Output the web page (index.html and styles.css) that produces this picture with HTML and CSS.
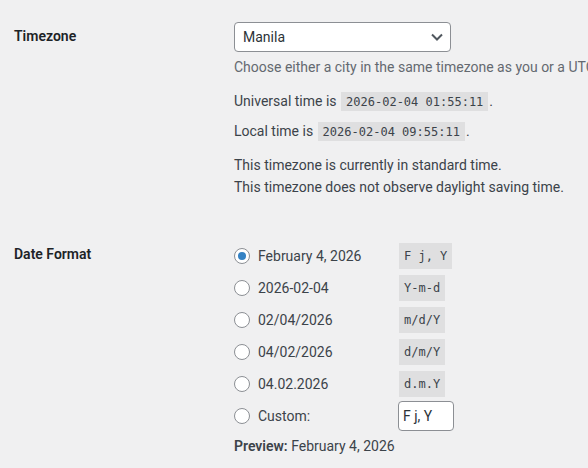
FILE: index.html
```html
<!DOCTYPE html>
<html>
<head>
    <meta charset="UTF-8">
    <meta name="viewport" content="width=device-width, initial-scale=1.0">
    <title>General Settings</title>
    <link rel="stylesheet" href="styles.css">
</head>
<body>
    <div class="wrap">
        <table class="form-table">
            <tr>
                <th>Timezone</th>
                <td>
                    <span class="select-wrap">
                        <select id="timezone">
                            <option selected>Manila</option>
                            <option>Singapore</option>
                            <option>Tokyo</option>
                            <option>UTC+8</option>
                        </select>
                        <svg class="chevron" width="12" height="8" viewBox="0 0 12 8"><path d="M1 1.5l5 5 5-5" fill="none" stroke="#50575e" stroke-width="2"/></svg>
                    </span>
                    <p class="description">Choose either a city in the same timezone as you or a UTC (Coordinated Universal Time) time offset.</p>
                    <p class="timezone-info">Universal time is <code>2026-02-04 01:55:11</code>.</p>
                    <p class="timezone-info">Local time is <code>2026-02-04 09:55:11</code>.</p>
                    <p class="timezone-info dst">This timezone is currently in standard time.<br>This timezone does not observe daylight saving time.</p>
                </td>
            </tr>
            <tr>
                <th>Date Format</th>
                <td>
                    <fieldset id="formats">
                        <label><input type="radio" name="date_format" value="F j, Y" checked> <span class="date-time-text">February 4, 2026</span><code>F j, Y</code></label>
                        <label><input type="radio" name="date_format" value="Y-m-d"> <span class="date-time-text">2026-02-04</span><code>Y-m-d</code></label>
                        <label><input type="radio" name="date_format" value="m/d/Y"> <span class="date-time-text">02/04/2026</span><code>m/d/Y</code></label>
                        <label><input type="radio" name="date_format" value="d/m/Y"> <span class="date-time-text">04/02/2026</span><code>d/m/Y</code></label>
                        <label><input type="radio" name="date_format" value="d.m.Y"> <span class="date-time-text">04.02.2026</span><code>d.m.Y</code></label>
                        <label><input type="radio" name="date_format" value="custom"> <span class="date-time-text">Custom:</span><input type="text" class="small-text" value="F j, Y"></label>
                    </fieldset>
                    <p class="preview"><strong>Preview:</strong> <span id="example">February 4, 2026</span></p>
                </td>
            </tr>
        </table>
    </div>
</body>
</html>
```

FILE: styles.css
```css
body {
    margin: 0;
    background-color: #f0f0f1;
    color: #3c434a;
    font-family: "Segoe UI", Roboto, "Noto Sans", sans-serif;
    font-size: 14px;
    overflow: hidden;
}
.wrap {
    padding: 7px 0 0 14px;
}
.form-table {
    width: 100%;
    table-layout: fixed;
    border-collapse: collapse;
}
.form-table th {
    width: 200px;
    padding: 20px 10px 20px 0;
    text-align: left;
    vertical-align: top;
    font-weight: 600;
    line-height: 18px;
    color: #1d2327;
}
.form-table td {
    padding: 15px 10px;
    line-height: 21px;
    vertical-align: top;
    white-space: nowrap;
}
.form-table p {
    margin: 0;
}
.select-wrap {
    position: relative;
    display: block;
    width: 217px;
}
select {
    display: block;
    width: 217px;
    height: 30px;
    padding: 0 24px 0 8px;
    border: 1px solid #8c8f94;
    border-radius: 4px;
    background: #fff;
    color: #2c3338;
    font: inherit;
    appearance: none;
}
.chevron {
    position: absolute;
    right: 8px;
    top: 11px;
    pointer-events: none;
}
.description {
    color: #646970;
    margin-top: 5px !important;
}
.timezone-info {
    margin-top: 13px !important;
}
.timezone-info + .timezone-info {
    margin-top: 8px !important;
}
.timezone-info.dst {
    margin: 11px 0 12px !important;
    line-height: 22px;
}
code {
    margin: 0 1px;
    padding: 3px 5px 2px;
    background: rgba(0, 0, 0, 0.07);
    font-family: "DejaVu Sans Mono", monospace;
    font-size: 12px;
    color: #3c434a;
}
fieldset {
    margin: 0;
    padding: 0;
    border: 0;
}
fieldset label {
    display: flex;
    align-items: center;
    height: 32px;
}
input[type="radio"] {
    appearance: none;
    width: 16px;
    height: 16px;
    margin: 0 4px 0 0;
    border: 1px solid #8c8f94;
    border-radius: 50%;
    background: #fff;
    display: inline-flex;
    align-items: center;
    justify-content: center;
}
input[type="radio"]:checked::before {
    content: "";
    width: 8px;
    height: 8px;
    border-radius: 50%;
    background: #3582c4;
}
.date-time-text {
    display: inline-block;
    min-width: 140px;
    margin-left: 4px;
}
.small-text {
    width: 56px;
    height: 30px;
    box-sizing: border-box;
    padding: 0 4px;
    border: 1px solid #8c8f94;
    border-radius: 4px;
    background: #fff;
    color: #2c3338;
    font: inherit;
}
.preview {
    margin-top: 4px !important;
}
.preview strong {
    font-weight: 600;
}
```
